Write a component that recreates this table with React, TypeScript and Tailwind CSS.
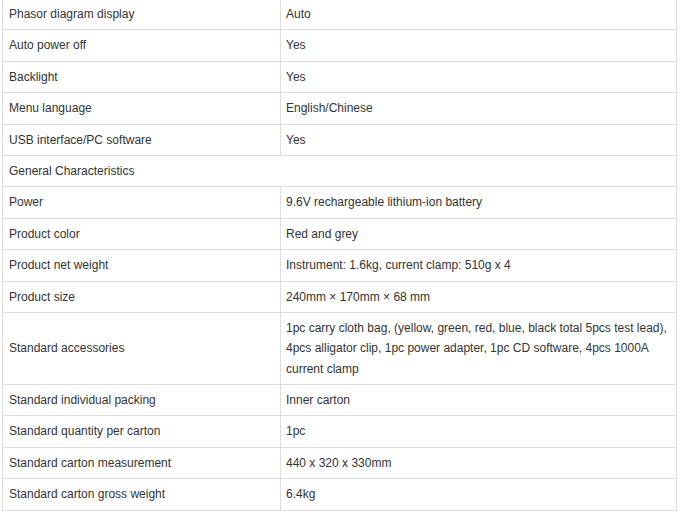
const rows: [string, string | null][] = [
  ["Phasor diagram display", "Auto"],
  ["Auto power off", "Yes"],
  ["Backlight", "Yes"],
  ["Menu language", "English/Chinese"],
  ["USB interface/PC software", "Yes"],
  ["General Characteristics", null],
  ["Power", "9.6V rechargeable lithium-ion battery"],
  ["Product color", "Red and grey"],
  ["Product net weight", "Instrument: 1.6kg, current clamp: 510g x 4"],
  ["Product size", "240mm × 170mm × 68 mm"],
  [
    "Standard accessories",
    "1pc carry cloth bag, (yellow, green, red, blue, black total 5pcs test lead), 4pcs alligator clip, 1pc power adapter, 1pc CD software, 4pcs 1000A current clamp",
  ],
  ["Standard individual packing", "Inner carton"],
  ["Standard quantity per carton", "1pc"],
  ["Standard carton measurement", "440 x 320 x 330mm"],
  ["Standard carton gross weight", "6.4kg"],
];

export default function App() {
  return (
    <div className="w-[683px] h-[515px] overflow-hidden bg-white">
      <table
        className="ml-[2px] -mt-[2px] w-[675px] border-collapse text-[12px] leading-[1.7] text-[#333]"
        style={{ fontFamily: '"Liberation Sans", Arial, sans-serif' }}
      >
        <tbody>
          {rows.map(([label, value]) =>
            value === null ? (
              <tr key={label}>
                <td colSpan={2} className="border border-[#ddd] px-[6px] py-[5px] align-middle">
                  {label}
                </td>
              </tr>
            ) : (
              <tr key={label}>
                <td className="w-[278px] border border-[#ddd] px-[6px] py-[5px] align-middle">
                  {label}
                </td>
                <td className="border border-[#ddd] pl-[5px] pr-[6px] py-[5px] align-middle">{value}</td>
              </tr>
            )
          )}
        </tbody>
      </table>
    </div>
  );
}
